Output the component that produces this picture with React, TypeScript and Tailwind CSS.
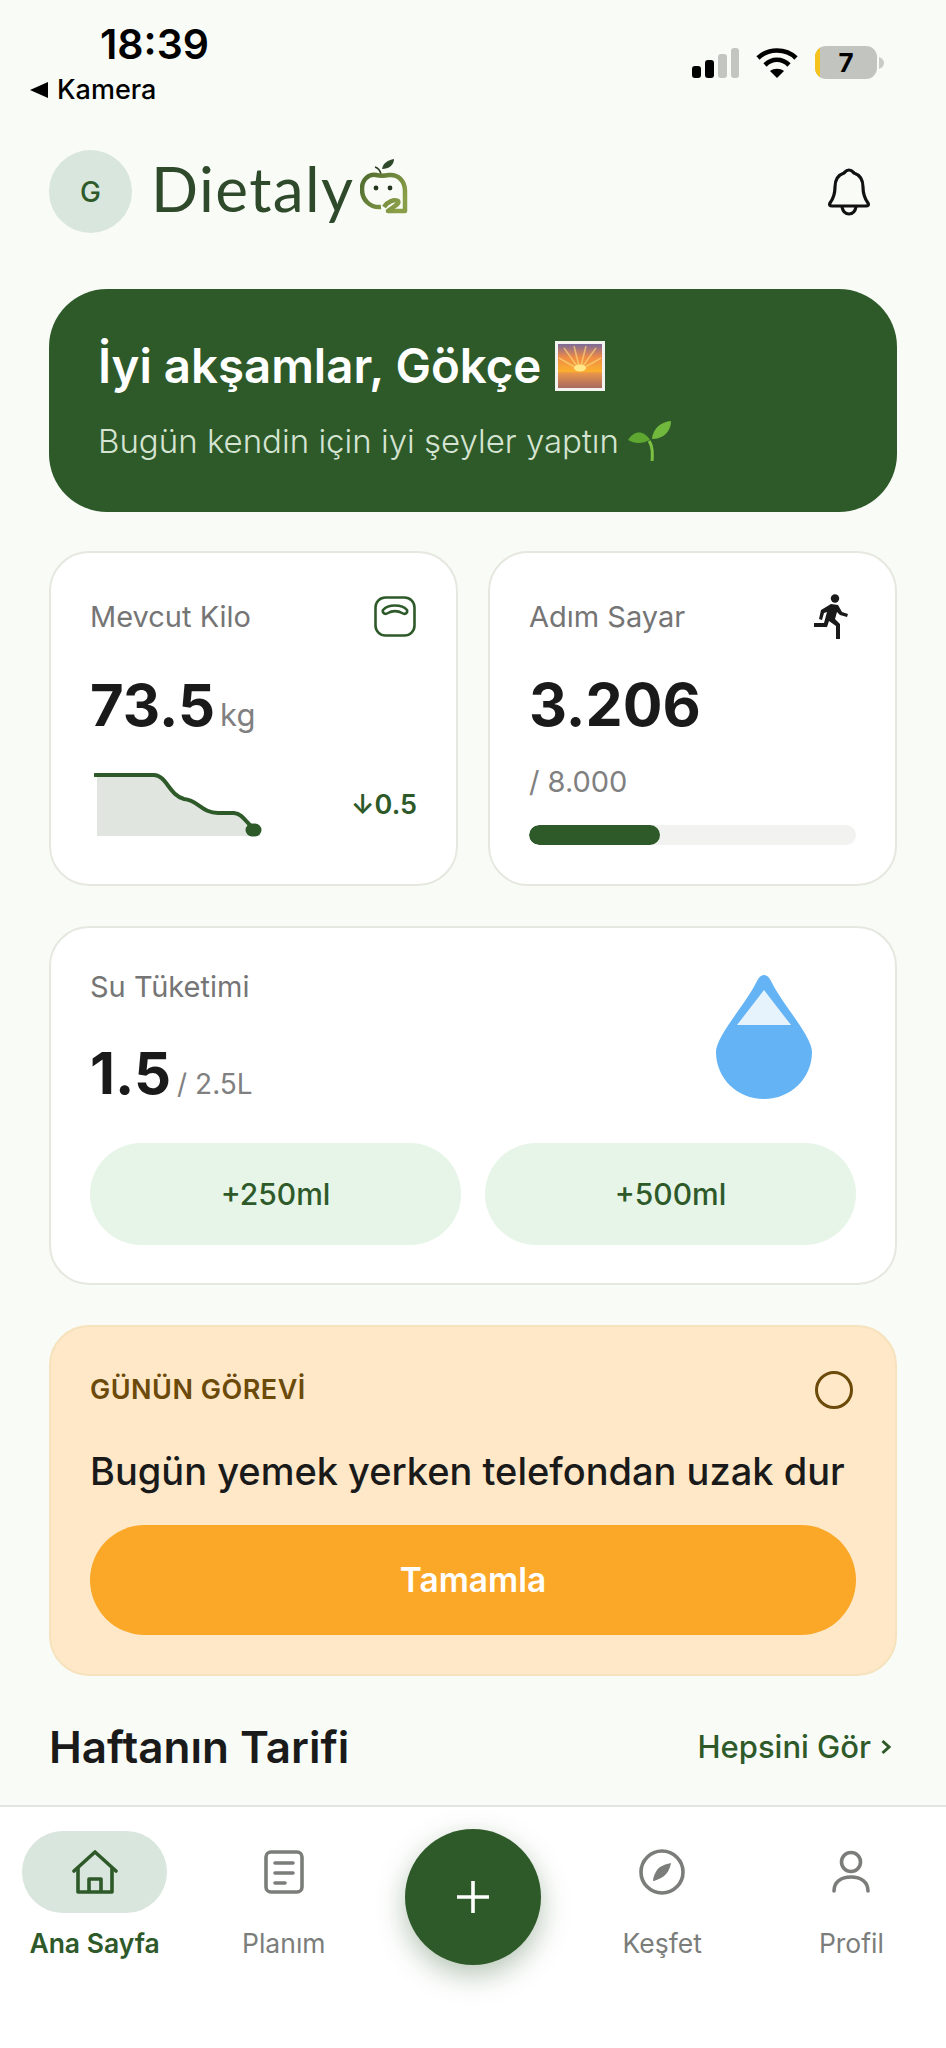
import React from 'react';

const font = { fontFamily: 'Inter, "Noto Sans", sans-serif' };

function SunriseEmoji() {
  return (
    <svg width="52" height="52" viewBox="0 0 52 52">
      <defs>
        <linearGradient id="sky" x1="0" y1="0" x2="0" y2="1">
          <stop offset="0" stopColor="#7c6a9a" />
          <stop offset="0.3" stopColor="#ee8a45" />
          <stop offset="0.62" stopColor="#fbb02e" />
          <stop offset="0.66" stopColor="#e9964a" />
          <stop offset="1" stopColor="#a8685f" />
        </linearGradient>
      </defs>
      <rect x="1" y="1" width="50" height="50" fill="#f2f2ee" />
      <rect x="4" y="4" width="44" height="44" fill="url(#sky)" />
      <path d="M26 30 L10 8 M26 30 L20 6 M26 30 L32 6 M26 30 L42 8 M26 30 L5 18 M26 30 L47 18" stroke="#fdd27a" strokeWidth="1.6" opacity="0.7" />
      <ellipse cx="26" cy="28" rx="6" ry="3.5" fill="#ffe88a" />
    </svg>
  );
}

function SeedlingEmoji() {
  return (
    <svg width="46" height="40" viewBox="0 0 44 40">
      <path d="M24 40 C25 30 24 24 21 20" stroke="#7cc142" strokeWidth="3" fill="none" />
      <path d="M0 19 C6 9 16 9 22 19 C14 23 7 23 0 19 Z" fill="#5ea832" />
      <path d="M24 18 C25 7 33 1 43 0 C43 10 36 18 24 18 Z" fill="#71b93d" />
    </svg>
  );
}

function AppleMark() {
  return (
    <svg width="48" height="55" viewBox="0 0 48 55" fill="none">
      <defs>
        <linearGradient id="apple" x1="0" y1="0" x2="1" y2="0.6">
          <stop offset="0" stopColor="#4d6b2f" />
          <stop offset="1" stopColor="#8a9e48" />
        </linearGradient>
      </defs>
      <path d="M21 15 C20 11 18 9 15 8" stroke="#2c3f22" strokeWidth="1.6" />
      <path d="M22 10 C23 4 28 1 34 0 C34 6 29 10 22 10 Z" fill="#2f4a2b" />
      <path d="M21 48 C10 49 2 41 2 30 C2 20 9 15 16 16 C20 17 24 17 29 16 C38 15 45 22 45 32 L45 52 L28 52 C34 47 40 45 38 42 C34 40 27 43 24 48" stroke="url(#apple)" strokeWidth="4.5" strokeLinejoin="round" />
      <circle cx="16" cy="29" r="2.4" fill="#26361f" />
      <circle cx="30" cy="29" r="2.4" fill="#26361f" />
    </svg>
  );
}

function ScaleIcon() {
  return (
    <svg width="42" height="41" viewBox="0 0 42 41" fill="none" stroke="#2e5a2a" strokeWidth="2.6">
      <rect x="1.5" y="1.5" width="39" height="38" rx="10" />
      <path d="M9 14 C14 8 28 8 33 14 C34 17 31 19 28 17 C24 14.5 18 14.5 14 17 C11 19 8 17 9 14 Z" strokeLinejoin="round" />
    </svg>
  );
}

function Runner() {
  return (
    <svg width="36" height="46" viewBox="0 0 36 46" fill="#1a1a1a">
      <circle cx="22" cy="4.5" r="4.2" />
      <path d="M18 10 L25 11 L29 18 L35 20 L34 23 L27 21 L24 18 L22 25 L27 30 L27 45 L23 45 L23 32 L16 27 L14 33 L1 33 L1 29 L11 29 L14 18 L11 19 L9 26 L6 25 L8 16 Z" />
    </svg>
  );
}

function Sparkline() {
  return (
    <svg width="168" height="66" viewBox="0 0 168 66" fill="none">
      <path d="M3 3 L62 3 C72 3 76 24 90 27 C104 28 108 41 124 41 L140 41 C150 42 152 54 166 58 L166 64 L3 64 Z" fill="#e0e5df" />
      <path d="M1 3 L60 3 C72 3 76 24 90 27 C104 28 108 41 124 41 L140 41 C150 42 152 52 162 58" stroke="#2e5a2a" strokeWidth="4" strokeLinecap="round" />
      <circle cx="158" cy="58" r="6.5" fill="#2e5a2a" />
      <circle cx="161" cy="58" r="6.5" fill="#2e5a2a" />
    </svg>
  );
}

function Drop() {
  return (
    <svg width="96" height="125" viewBox="0 0 96 125">
      <path d="M48 1 C51 1 53 3 55 7 C66 30 96 62 96 78 C96 104 75 125 48 125 C21 125 0 104 0 78 C0 62 30 30 41 7 C43 3 45 1 48 1 Z" fill="#63b3f5" />
      <path d="M48 16 L75 51 L21 51 Z" fill="#e6f2fc" />
    </svg>
  );
}

function StatCardShell({ children, className }: { children: React.ReactNode; className?: string }) {
  return <div className={`bg-white border-2 border-[#e6e8e0] rounded-[40px] ${className ?? ''}`}>{children}</div>;
}

function NavItem({ label, active, children }: { label: string; active?: boolean; children: React.ReactNode }) {
  return (
    <div className="flex flex-col items-center pt-[24px]">
      <div className={`w-[145px] h-[82px] rounded-[41px] flex items-center justify-center ${active ? 'bg-[#d9e6dd]' : ''}`}>
        {children}
      </div>
      <span className={`mt-[14px] text-[26.5px] leading-[32px] ${active ? 'font-semibold text-[#2e5a2a]' : 'text-[#7b7d7a]'}`}>
        {label}
      </span>
    </div>
  );
}

export default function App() {
  return (
    <div className="w-[946px] h-[2048px] bg-[#f9fbf7] flex flex-col overflow-hidden" style={font}>
      {/* Status bar */}
      <div className="h-[150px] flex justify-between shrink-0">
        <div className="pl-[30px] pt-[19px]">
          <div className="ml-[70px] text-[41px] leading-[50px] font-semibold text-black">18:39</div>
          <div className="flex items-center gap-[9px] mt-[5px]">
            <svg width="18" height="18" viewBox="0 0 18 18"><path d="M0 9 L18 1 L18 17 Z" fill="#000" /></svg>
            <span className="text-[27px] leading-[32px] font-medium text-black">Kamera</span>
          </div>
        </div>
        <div className="flex items-start gap-[17px] pt-[46px] pr-[62px]">
          <svg width="48" height="32" viewBox="0 0 48 32" className="mt-[1px]">
            <rect x="1" y="19" width="9" height="12" rx="3" fill="#000" />
            <rect x="14" y="13" width="9" height="18" rx="3" fill="#000" />
            <rect x="27" y="7" width="9" height="24" rx="3" fill="#c3c5c1" />
            <rect x="40" y="1" width="8" height="30" rx="3" fill="#c3c5c1" />
          </svg>
          <svg width="42" height="32" viewBox="0 0 42 32" fill="none" stroke="#000" strokeWidth="4.6" className="mt-[1px]">
            <path d="M2 11 C12 1 30 1 40 11" />
            <path d="M9 18 C16 11 26 11 33 18" />
            <path d="M21 31 L14 24 C18 21 24 21 28 24 Z" fill="#000" stroke="none" />
          </svg>
          <div className="flex items-center">
            <div className="w-[62px] h-[33px] rounded-[11px] bg-[#c2c4bf] overflow-hidden flex relative">
              <div className="w-[5px] h-full bg-[#f6c21c]" />
              <span className="absolute inset-0 flex items-center justify-center text-[26px] font-bold text-black">7</span>
            </div>
            <svg width="5" height="12" viewBox="0 0 5 12" className="ml-[2px]"><path d="M0 0 C3 1 5 3 5 6 C5 9 3 11 0 12 Z" fill="#c9cbc6" /></svg>
          </div>
        </div>
      </div>

      {/* Header */}
      <div className="h-[83px] flex items-center justify-between pl-[49px] pr-[76px] shrink-0">
        <div className="flex items-center">
          <div className="w-[83px] h-[83px] rounded-full bg-[#d9e6dd] flex items-center justify-center text-[28px] font-medium text-[#2e5a2a]">G</div>
          <span className="ml-[19px] -mt-[8px] text-[62px] leading-[70px] text-[#2f4a2b] tracking-[1.4px]" style={{ fontFamily: 'Lato, sans-serif' }}>Dietaly</span>
          <div className="ml-[6px] -mt-[10px]"><AppleMark /></div>
        </div>
        <svg width="42" height="48" viewBox="0 0 42 48" fill="none" stroke="#111" strokeWidth="3.2" strokeLinejoin="round" strokeLinecap="round">
          <path d="M21 2 C24 2 25 4 26 5 C32 7 35 12 35 19 C35 27 37 31 40 35 C41 37 40 38 38 38 L4 38 C2 38 1 37 2 35 C5 31 7 27 7 19 C7 12 10 7 16 5 C17 4 18 2 21 2 Z" />
          <path d="M14 39 C15 44 18 46 21 46 C24 46 27 44 28 39" />
        </svg>
      </div>

      {/* Content */}
      <div className="px-[49px] pt-[56px] flex flex-col shrink-0">
        <div className="h-[223px] bg-[#2e5a2a] rounded-[58px] pl-[49px] pt-[44px]">
          <div className="flex items-center gap-[13px] h-[66px]">
            <span className="text-[47.4px] leading-[66px] font-semibold text-white">İyi akşamlar, Gökçe</span>
            <SunriseEmoji />
          </div>
          <div className="flex items-center gap-[8px] mt-[20px] h-[44px]">
            <span className="text-[33px] leading-[44px] font-light text-[#d5e4d2]">Bugün kendin için iyi şeyler yaptın</span>
            <SeedlingEmoji />
          </div>
        </div>

        <div className="grid grid-cols-2 gap-[30px] mt-[39px]">
          <StatCardShell className="h-[335px] px-[39px] pt-[36px]">
            <div className="flex items-center justify-between h-[56px]">
              <span className="text-[29px] text-[#757575]">Mevcut Kilo</span>
              <div className="mr-[1px] -mt-[2px]"><ScaleIcon /></div>
            </div>
            <div className="flex items-baseline mt-[22px] h-[76px]">
              <span className="text-[58px] leading-[76px] font-bold text-[#1a1a1a]">73.5</span>
              <span className="ml-[5px] text-[31px] text-[#808080]">kg</span>
            </div>
            <div className="flex items-center justify-between mt-[29px]">
              <div className="ml-[4px]"><Sparkline /></div>
              <span className="text-[27px] font-semibold text-[#2e5a2a]">↓0.5</span>
            </div>
          </StatCardShell>
          <StatCardShell className="h-[335px] px-[39px] pt-[36px]">
            <div className="flex items-center justify-between h-[56px]">
              <span className="text-[29px] text-[#757575]">Adım Sayar</span>
              <div className="mr-[7px]"><Runner /></div>
            </div>
            <div className="mt-[22px] h-[76px] text-[59px] leading-[76px] font-bold text-[#1a1a1a]">3.206</div>
            <div className="mt-[21px] text-[29px] leading-[36px] text-[#808080]">/ 8.000</div>
            <div className="mt-[25px] h-[20px] rounded-full bg-[#f2f3f1] overflow-hidden">
              <div className="h-full w-[40%] rounded-full bg-[#2e5a2a]" />
            </div>
          </StatCardShell>
        </div>

        <StatCardShell className="h-[359px] mt-[40px] px-[39px] pt-[30px]">
          <div className="flex justify-between h-[185px]">
            <div>
              <div className="text-[29px] leading-[58px] text-[#757575]">Su Tüketimi</div>
              <div className="flex items-baseline mt-[19px]">
                <span className="text-[58px] leading-[76px] font-bold text-[#1a1a1a]">1.5</span>
                <span className="ml-[6px] text-[28px] text-[#808080]">/ 2.5L</span>
              </div>
            </div>
            <div className="mr-[44px] mt-[16px]"><Drop /></div>
          </div>
          <div className="grid grid-cols-2 gap-[24px]">
            <div className="h-[102px] rounded-[51px] bg-[#e7f4e8] flex items-center justify-center text-[30px] font-medium text-[#2e5a2a]">+250ml</div>
            <div className="h-[102px] rounded-[51px] bg-[#e7f4e8] flex items-center justify-center text-[30px] font-medium text-[#2e5a2a]">+500ml</div>
          </div>
        </StatCardShell>

        <div className="h-[351px] mt-[40px] bg-[#fee8c8] border-2 border-[#f6e2bd] rounded-[40px] px-[39px] pt-[43px]">
          <div className="flex items-center justify-between h-[40px]">
            <span className="text-[27px] font-semibold text-[#6b4a0a] tracking-[0.5px]">GÜNÜN GÖREVİ</span>
            <div className="w-[38px] h-[38px] rounded-full border-[3px] border-[#6b4a0a] mr-[3px]" />
          </div>
          <div className="mt-[36px] text-[38px] leading-[50px] font-medium text-[#1a1a1a] whitespace-nowrap">Bugün yemek yerken telefondan uzak dur</div>
          <div className="mt-[29px] h-[110px] rounded-[55px] bg-[#fba727] flex items-center justify-center text-[33.5px] font-semibold text-white">Tamamla</div>
        </div>

        <div className="flex items-center justify-between mt-[45px] h-[52px]">
          <span className="text-[44px] font-semibold text-[#1a1a1a]">Haftanın Tarifi</span>
          <div className="flex items-center gap-[10px] pr-[6px]">
            <span className="text-[31px] font-medium text-[#2e5a2a]">Hepsini Gör</span>
            <svg width="10" height="16" viewBox="0 0 10 16" fill="none" stroke="#2e5a2a" strokeWidth="3"><path d="M1.5 2 L8 8 L1.5 14" /></svg>
          </div>
        </div>
      </div>

      {/* Bottom nav */}
      <div className="mt-auto h-[243px] bg-white border-t-2 border-[#e3e5e1] grid grid-cols-5 shrink-0">
        <NavItem label="Ana Sayfa" active>
          <svg width="46" height="46" viewBox="0 0 46 46" fill="none" stroke="#2e5a2a" strokeWidth="3.6" strokeLinejoin="round">
            <path d="M2 22 L23 3 L44 22" strokeLinecap="round" />
            <path d="M6 19 L6 43 L40 43 L40 19" />
            <path d="M17 43 L17 30 L29 30 L29 43" />
          </svg>
        </NavItem>
        <NavItem label="Planım">
          <svg width="40" height="44" viewBox="0 0 40 44" fill="none" stroke="#7b7d7a" strokeWidth="3.6" strokeLinecap="round">
            <rect x="2" y="2" width="36" height="40" rx="5" />
            <path d="M11 13 L29 13 M11 23 L29 23 M11 33 L21 33" />
          </svg>
        </NavItem>
        <div className="flex justify-center pt-[22px]">
          <div className="w-[136px] h-[136px] rounded-full bg-[#2e5a2a] shadow-[0_10px_28px_rgba(46,90,42,0.35)] flex items-center justify-center">
            <svg width="36" height="36" viewBox="0 0 36 36" stroke="#fff" strokeWidth="3.6"><path d="M18 2 L18 34 M2 18 L34 18" /></svg>
          </div>
        </div>
        <NavItem label="Keşfet">
          <svg width="46" height="46" viewBox="0 0 46 46" fill="none" stroke="#7b7d7a" strokeWidth="3.6">
            <circle cx="23" cy="23" r="21" />
            <path d="M32 14 C31 20 28 26 22 29 C19 30 16 32 14 32 C14 28 16 24 18 21 C21 17 27 15 32 14 Z" fill="#7b7d7a" stroke="none" />
          </svg>
        </NavItem>
        <NavItem label="Profil">
          <svg width="38" height="44" viewBox="0 0 38 44" fill="none" stroke="#7b7d7a" strokeWidth="3.6" strokeLinecap="round">
            <circle cx="19" cy="12" r="9.5" />
            <path d="M2 41 C2 32 9 27 19 27 C29 27 36 32 36 41" />
          </svg>
        </NavItem>
      </div>
    </div>
  );
}
